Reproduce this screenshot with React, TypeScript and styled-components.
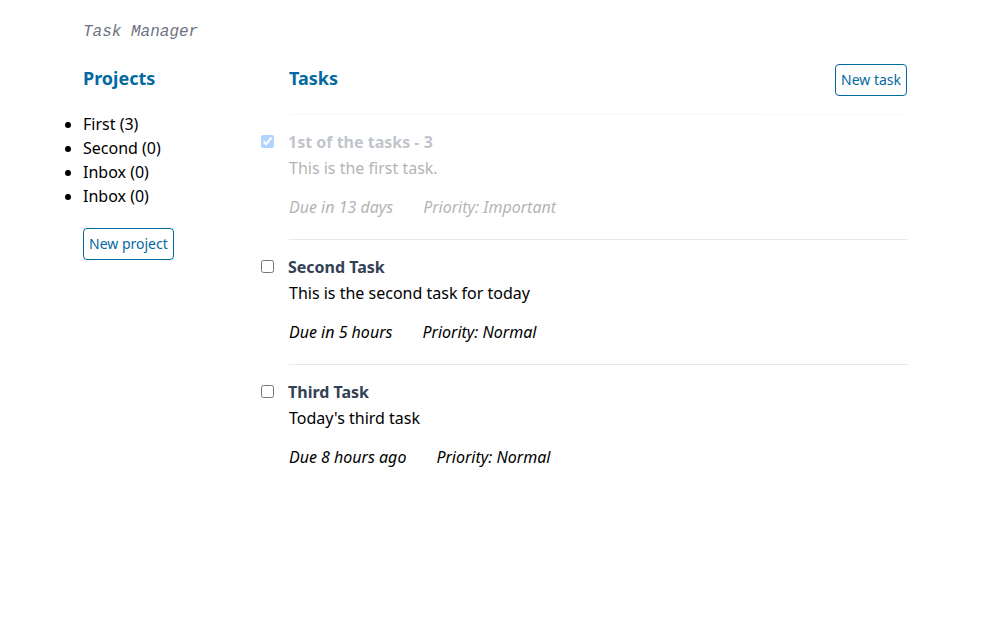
import React, { useState } from "react";
import styled, { createGlobalStyle } from "styled-components";

const GlobalStyle = createGlobalStyle`
  *, *::before, *::after { box-sizing: border-box; }
  body {
    margin: 0;
    background: #fff;
    color: #000;
    font: 16px/24px "Noto Sans", sans-serif;
  }
  h1, h2, h3, p, ul { margin: 0; padding: 0; }
`;

const Page = styled.div`
  padding: 20px 93px 32px 83px;
`;

const SiteTitle = styled.h1`
  color: #6b7280;
  font: italic 400 16px/24px "Liberation Mono", monospace;
`;

const Columns = styled.div`
  display: grid;
  grid-template-columns: 1fr 3fr;
  margin-top: 20px;
`;

const SectionHeader = styled.header`
  display: flex;
  align-items: flex-start;
  justify-content: space-between;
  min-height: 32px;
`;

const SectionTitle = styled.h2`
  color: #0369a1;
  font-size: 18px;
  line-height: 28px;
  font-weight: 700;
`;

const OutlineButton = styled.button`
  height: 32px;
  padding: 0 5px;
  border: 1px solid #0369a1;
  border-radius: 4px;
  background: #fff;
  color: #0369a1;
  font: 14px/20px "Noto Sans", sans-serif;
  cursor: pointer;
`;

const ProjectList = styled.ul`
  margin: 16px 0 20px;
  list-style: disc outside;
`;

const TaskList = styled.ul`
  margin-top: 18px;
  list-style: none;
`;

const TaskItem = styled.li<{ $done: boolean }>`
  padding: 15px 0 20px;
  border-top: 1px solid #e5e7eb;
  opacity: ${({ $done }) => ($done ? 0.3 : 1)};
`;

const TaskHeading = styled.div`
  display: flex;
  align-items: flex-start;
  gap: 14px;
  margin: 0 0 2px -28px;
`;

const Checkbox = styled.input`
  width: 13px;
  height: 13px;
  margin: 5px 0 0;
`;

const TaskTitle = styled.label`
  color: #334155;
  font-weight: 700;
`;

const TaskMeta = styled.div`
  display: flex;
  gap: 30px;
  margin-top: 15px;
  font-style: italic;
`;

const projects = [
  { id: 1, name: "First", count: 3 },
  { id: 2, name: "Second", count: 0 },
  { id: 3, name: "Inbox", count: 0 },
  { id: 4, name: "Inbox", count: 0 },
];

const initialTasks = [
  { id: 1, title: "1st of the tasks - 3", text: "This is the first task.", due: "Due in 13 days", priority: "Important", done: true },
  { id: 2, title: "Second Task", text: "This is the second task for today", due: "Due in 5 hours", priority: "Normal", done: false },
  { id: 3, title: "Third Task", text: "Today's third task", due: "Due 8 hours ago", priority: "Normal", done: false },
];

export default function App() {
  const [tasks, setTasks] = useState(initialTasks);
  const toggle = (id: number) =>
    setTasks((all) => all.map((t) => (t.id === id ? { ...t, done: !t.done } : t)));

  return (
    <Page>
      <GlobalStyle />
      <SiteTitle>Task Manager</SiteTitle>
      <Columns>
        <aside>
          <SectionHeader>
            <SectionTitle>Projects</SectionTitle>
          </SectionHeader>
          <ProjectList>
            {projects.map((p) => (
              <li key={p.id}>{`${p.name} (${p.count})`}</li>
            ))}
          </ProjectList>
          <OutlineButton type="button">New project</OutlineButton>
        </aside>
        <main>
          <SectionHeader>
            <SectionTitle>Tasks</SectionTitle>
            <OutlineButton type="button">New task</OutlineButton>
          </SectionHeader>
          <TaskList>
            {tasks.map((t) => (
              <TaskItem key={t.id} $done={t.done}>
                <TaskHeading>
                  <Checkbox
                    type="checkbox"
                    id={`task-${t.id}`}
                    checked={t.done}
                    onChange={() => toggle(t.id)}
                  />
                  <TaskTitle htmlFor={`task-${t.id}`}>{t.title}</TaskTitle>
                </TaskHeading>
                <p>{t.text}</p>
                <TaskMeta>
                  <span>{t.due}</span>
                  <span>{`Priority: ${t.priority}`}</span>
                </TaskMeta>
              </TaskItem>
            ))}
          </TaskList>
        </main>
      </Columns>
    </Page>
  );
}
